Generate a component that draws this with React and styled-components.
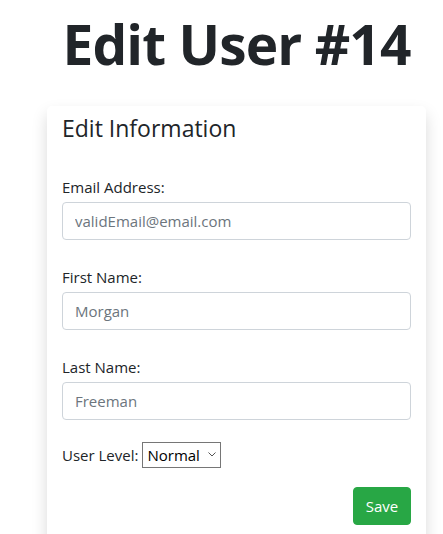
import React from 'react';
import styled, { createGlobalStyle } from 'styled-components';

const Global = createGlobalStyle`
  html, body {
    margin: 0;
    padding: 0;
    background: #fff;
    overflow: hidden;
  }
  body {
    font-family: "Open Sans", "Liberation Sans", sans-serif;
    color: #212529;
  }
`;

const Page = styled.div`
  width: 379px;
  padding-left: 47px;
`;

const Title = styled.h1`
  margin: 11px 0 0;
  height: 95px;
  font-size: 55px;
  font-weight: 700;
  line-height: 1.2;
  text-align: center;
  letter-spacing: -0.9px;
`;

const Card = styled.div`
  background: #fff;
  border-radius: 5px;
  box-shadow: 0 0.5rem 1rem rgba(0, 0, 0, 0.15);
  padding: 8px 15px 30px;
  height: 500px;
`;

const CardTitle = styled.h4`
  margin: 0 0 33px;
  font-size: 23px;
  font-weight: 400;
  line-height: 28px;
`;

const Group = styled.div`
  margin-bottom: ${(p) => p.$gap}px;
`;

const Label = styled.label`
  display: block;
  font-size: 15px;
  line-height: 24px;
  margin-bottom: 3px;
`;

const Input = styled.input`
  display: block;
  box-sizing: border-box;
  width: 349px;
  height: 38px;
  padding: 6px 12px;
  border: 1px solid #ced4da;
  border-radius: 4px;
  font-family: inherit;
  font-size: 15px;
  color: #495057;
  &::placeholder {
    color: #6c757d;
  }
`;

const LevelRow = styled.div`
  display: flex;
  align-items: center;
  gap: 4px;
  font-size: 15px;
  line-height: 24px;
  margin-bottom: 19px;
`;

const SelectWrap = styled.span`
  position: relative;
  display: inline-flex;
`;

const Select = styled.select`
  appearance: none;
  box-sizing: border-box;
  width: 79px;
  height: 26px;
  padding: 0 0 0 4px;
  border: 1px solid #767676;
  border-radius: 0;
  background: #fff;
  font-family: inherit;
  font-size: 15px;
  color: #000;
`;

const Chevron = styled.svg`
  position: absolute;
  right: 5px;
  top: 10px;
  pointer-events: none;
`;

const Actions = styled.div`
  display: flex;
  justify-content: flex-end;
  width: 349px;
`;

const SaveButton = styled.button`
  height: 38px;
  width: 58px;
  border: 1px solid #28a745;
  border-radius: 4px;
  background: #28a745;
  color: #fff;
  font-family: inherit;
  font-size: 15px;
  padding: 0;
`;

const fields = [
  { label: 'Email Address:', value: 'validEmail@email.com' },
  { label: 'First Name:', value: 'Morgan' },
  { label: 'Last Name:', value: 'Freeman' },
];

export default function App() {
  return (
    <Page>
      <Global />
      <Title>Edit User #14</Title>
      <Card>
        <CardTitle>Edit Information</CardTitle>
        {fields.map((f, i) => (
          <Group key={f.label} $gap={i === fields.length - 1 ? 22 : 25}>
            <Label>{f.label}</Label>
            <Input placeholder={f.value} />
          </Group>
        ))}
        <LevelRow>
          <span>User Level:</span>
          <SelectWrap>
            <Select defaultValue="normal">
              <option value="normal">Normal</option>
              <option value="admin">Admin</option>
            </Select>
            <Chevron width="8" height="5" viewBox="0 0 8 5">
              <path d="M0.5 0.5 L4 4 L7.5 0.5" fill="none" stroke="#555" strokeWidth="1" />
            </Chevron>
          </SelectWrap>
        </LevelRow>
        <Actions>
          <SaveButton>Save</SaveButton>
        </Actions>
      </Card>
    </Page>
  );
}
